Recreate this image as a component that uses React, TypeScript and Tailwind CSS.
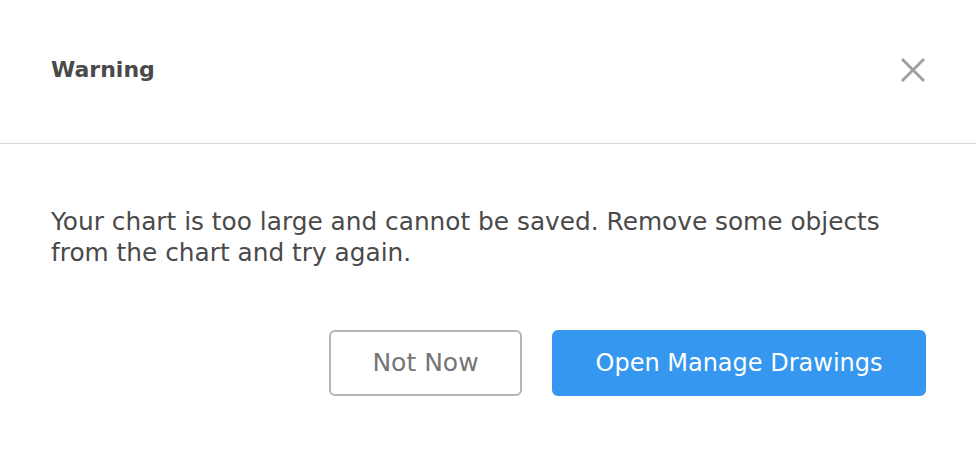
export default function App() {
  return (
    <div className="w-[976px] h-[462px] bg-white text-[#4a4a4a] font-['DejaVu_Sans',sans-serif]">
      <div className="h-[143px] flex items-center justify-between pl-[51px] pr-[50px]">
        <h2 className="text-[22px] font-bold -mt-[4px] text-[#4a4a4a]">Warning</h2>
        <button className="w-[26px] h-[26px] -mt-[4px] flex items-center justify-center text-[#9e9e9e]">
          <svg width="24" height="24" viewBox="0 0 24 24" fill="none" stroke="currentColor" strokeWidth="2.8">
            <path d="M1 1L23 23M23 1L1 23" />
          </svg>
        </button>
      </div>
      <div className="h-px bg-[#d6d9dc]" />
      <div className="px-[51px] pt-[62px]">
        <p className="text-[24.8px] leading-[31px] text-[#4a4a4a]">
          Your chart is too large and cannot be saved. Remove some objects from the chart and try again.
        </p>
      </div>
      <div className="flex justify-end gap-[30px] pr-[50px] pt-[62px]">
        <button className="w-[193px] h-[66px] rounded-[6px] border-2 border-[#b5b5b5] text-[25px] text-[#757575]">
          Not Now
        </button>
        <button className="w-[374px] h-[66px] rounded-[6px] bg-[#3597f0] text-[24px] text-white">
          Open Manage Drawings
        </button>
      </div>
    </div>
  )
}
